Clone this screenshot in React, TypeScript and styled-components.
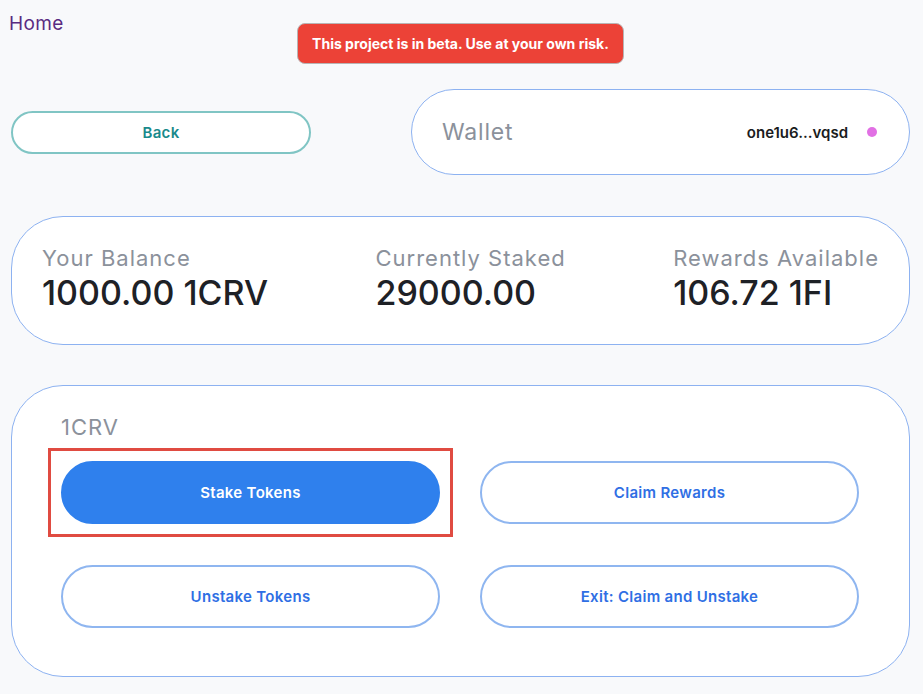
import React from "react";
import styled, { createGlobalStyle } from "styled-components";

const GlobalStyle = createGlobalStyle`
  body {
    margin: 0;
    background: #f8f9fb;
    font-family: Inter, "Noto Sans", sans-serif;
  }
`;

type Stat = { label: string; value: string };

const stats: Stat[] = [
  { label: "Your Balance", value: "1000.00 1CRV" },
  { label: "Currently Staked", value: "29000.00" },
  { label: "Rewards Available", value: "106.72 1FI" },
];

export default function App() {
  return (
    <Page>
      <GlobalStyle />
      <HomeLink>Home</HomeLink>
      <BannerRow>
        <Banner>This project is in beta. Use at your own risk.</Banner>
      </BannerRow>

      <TopRow>
        <BackButton>Back</BackButton>
        <Wallet>
          <WalletTitle>Wallet</WalletTitle>
          <Address>
            one1u6...vqsd
            <Dot />
          </Address>
        </Wallet>
      </TopRow>

      <StatsCard>
        {stats.map((s) => (
          <StatCol key={s.label}>
            <Label>{s.label}</Label>
            <Value>{s.value}</Value>
          </StatCol>
        ))}
      </StatsCard>

      <TokenCard>
        <Label>1CRV</Label>
        <ButtonGrid>
          <Focus>
            <ActionButton primary>Stake Tokens</ActionButton>
          </Focus>
          <ActionButton>Claim Rewards</ActionButton>
          <ActionButton>Unstake Tokens</ActionButton>
          <ActionButton>Exit: Claim and Unstake</ActionButton>
        </ButtonGrid>
      </TokenCard>
    </Page>
  );
}

const Page = styled.div`
  position: relative;
  padding: 0 13px 20px 11px;
`;

const HomeLink = styled.a`
  position: absolute;
  left: 9px;
  top: 12px;
  font-size: 19px;
  letter-spacing: 0.4px;
  color: #5a2b82;
`;

const BannerRow = styled.div`
  display: flex;
  justify-content: center;
  padding-top: 23px;
`;

const Banner = styled.div`
  background: #ec4237;
  color: #fff;
  font-weight: 700;
  font-size: 14px;
  height: 41px;
  box-sizing: border-box;
  padding: 0 14px;
  display: flex;
  align-items: center;
  border: 1px solid #b9b4b4;
  border-radius: 8px;
`;

const TopRow = styled.div`
  display: flex;
  justify-content: space-between;
  align-items: center;
  margin-top: 25px;
`;

const BackButton = styled.button`
  width: 300px;
  height: 43px;
  border: 2px solid #80c5c4;
  border-radius: 22px;
  background: #fff;
  color: #198a8c;
  font-family: inherit;
  font-weight: 600;
  font-size: 15px;
  letter-spacing: 0.3px;
`;

const Wallet = styled.div`
  width: 499px;
  height: 86px;
  box-sizing: border-box;
  border: 1px solid #8db2f1;
  border-radius: 43px;
  background: #fff;
  display: flex;
  align-items: center;
  justify-content: space-between;
  padding: 0 32px 0 30px;
`;

const WalletTitle = styled.span`
  font-size: 23px;
  letter-spacing: 0.8px;
  color: #8b919b;
`;

const Address = styled.span`
  display: flex;
  align-items: center;
  gap: 19px;
  font-size: 15px;
  font-weight: 600;
  color: #1a1c20;
`;

const Dot = styled.span`
  width: 10px;
  height: 10px;
  border-radius: 50%;
  background: #e170e4;
`;

const Card = styled.div`
  background: #fff;
  border: 1px solid #8db2f1;
  box-sizing: border-box;
`;

const StatsCard = styled(Card)`
  margin-top: 41px;
  height: 129px;
  border-radius: 52px;
  display: flex;
  justify-content: space-between;
  align-items: center;
  padding: 0 30px 3px;
`;

const StatCol = styled.div`
  display: flex;
  flex-direction: column;
`;

const Label = styled.div`
  font-size: 22px;
  letter-spacing: 1px;
  color: #8b919b;
`;

const Value = styled.div`
  font-size: 34px;
  font-weight: 500;
  color: #1e2126;
  margin-top: 1px;
`;

const TokenCard = styled(Card)`
  margin-top: 40px;
  height: 292px;
  border-radius: 52px;
  padding: 28px 50px 0 49px;
`;

const ButtonGrid = styled.div`
  display: grid;
  grid-template-columns: 1fr 1fr;
  column-gap: 40px;
  row-gap: 41px;
  margin-top: 21px;
`;

const Focus = styled.div`
  outline: 3px solid #e04b41;
  outline-offset: 10px;
  display: flex;
`;

const ActionButton = styled.button<{ primary?: boolean }>`
  width: 100%;
  height: 63px;
  border-radius: 32px;
  border: 2px solid ${(p) => (p.primary ? "#2f80ed" : "#8fb6f0")};
  background: ${(p) => (p.primary ? "#2f80ed" : "#fff")};
  color: ${(p) => (p.primary ? "#fff" : "#2f6fe4")};
  font-family: inherit;
  font-weight: 600;
  font-size: 15px;
  letter-spacing: 0.3px;
`;
